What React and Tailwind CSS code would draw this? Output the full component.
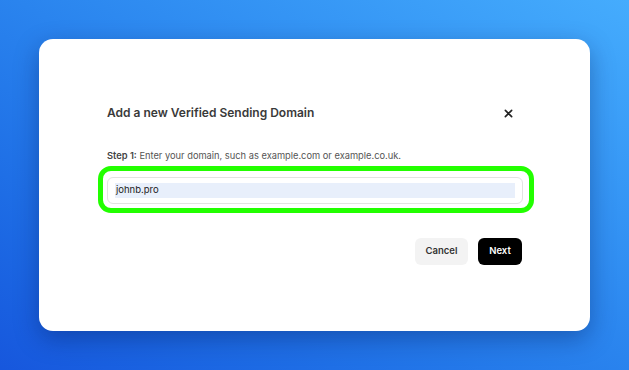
import React from "react";

function CloseIcon() {
  return (
    <svg width="9" height="9" viewBox="0 0 10 10" className="text-[#222]">
      <path d="M1.5 1.5 L8.5 8.5 M8.5 1.5 L1.5 8.5" stroke="currentColor" strokeWidth="1.8" strokeLinecap="round" />
    </svg>
  );
}

export default function App() {
  return (
    <div
      className="w-[629px] h-[370px] flex items-center justify-center bg-gradient-to-tr from-[#1757dd] to-[#45acfd]"
      style={{ fontFamily: "Inter, 'Noto Sans', sans-serif" }}
    >
      {/* Modal card */}
      <div className="w-[551px] h-[292px] bg-white rounded-[14px] shadow-[0_8px_24px_rgba(0,20,80,0.35)] px-[68px] pt-[64px]">
        <div className="flex items-center justify-between h-[20px]">
          <h1 className="text-[12px] font-semibold text-[#3a3a3a]">Add a new Verified Sending Domain</h1>
          <button className="w-[12px] h-[12px] flex items-center justify-center mr-[8px]">
            <CloseIcon />
          </button>
        </div>

        <p className="mt-[26px] text-[9.3px] leading-[14px] text-[#555]">
          <span className="font-semibold text-[#444]">Step 1:</span> Enter your domain, such as example.com or example.co.uk.
        </p>

        {/* highlighted input */}
        <div className="mt-[3px] -ml-[9px] -mr-[12px] border-[5px] border-[#22ff00] rounded-[13px] pt-[6px] pb-[4px] pl-[4px] pr-[6px]">
          <div className="h-[27px] border border-[#e2e2e2] rounded-[6px] flex items-center px-[7px]">
            <div className="flex-1 h-[15px] bg-[#e8effb] flex items-center pl-[1px] text-[9.5px] text-[#222]">
              johnb.pro
            </div>
          </div>
        </div>

        <div className="mt-[25px] flex justify-end gap-[10px]">
          <button className="w-[53px] h-[27px] rounded-[6px] bg-[#f3f3f3] text-[9.5px] font-semibold text-[#333]">
            Cancel
          </button>
          <button className="w-[44px] h-[27px] rounded-[6px] bg-black text-[9.5px] font-semibold text-white">
            Next
          </button>
        </div>
      </div>
    </div>
  );
}
